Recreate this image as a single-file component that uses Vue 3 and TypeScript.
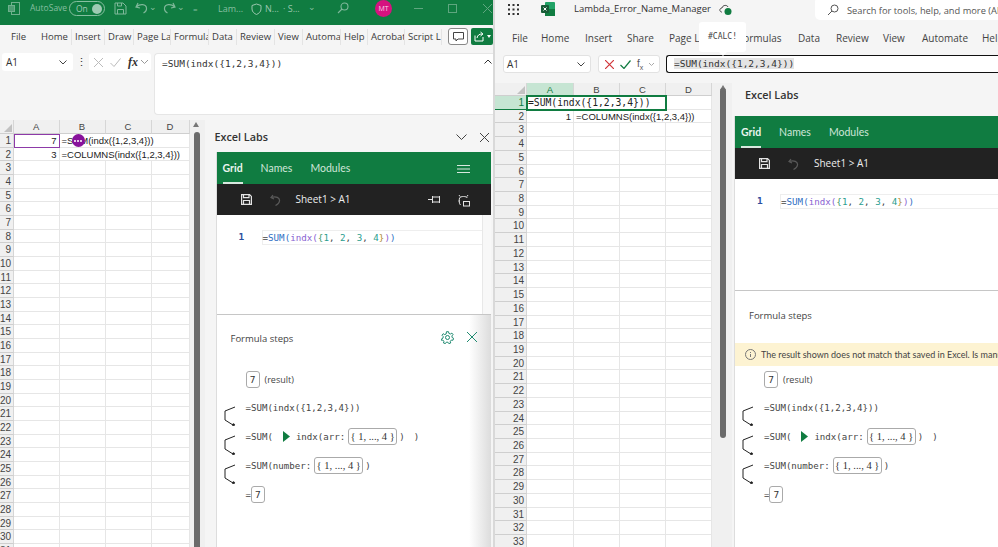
<script setup lang="ts">
const cols = ['A', 'B', 'C', 'D']

const leftTabs = [
  { label: 'File', w: 38 },
  { label: 'Home', w: 34 },
  { label: 'Insert', w: 33 },
  { label: 'Draw', w: 29 },
  { label: 'Page La', w: 37 },
  { label: 'Formula', w: 38 },
  { label: 'Data', w: 28 },
  { label: 'Review', w: 38 },
  { label: 'View', w: 28 },
  { label: 'Automa', w: 38 },
  { label: 'Help', w: 27 },
  { label: 'Acrobat', w: 37 },
  { label: 'Script L', w: 37 },
]

const rightTabs = [
  { label: 'File', w: 29 },
  { label: 'Home', w: 44 },
  { label: 'Insert', w: 42 },
  { label: 'Share', w: 42 },
  { label: 'Page L', w: 69 },
  { label: 'Formulas', w: 60 },
  { label: 'Data', w: 38 },
  { label: 'Review', w: 47 },
  { label: 'View', w: 39 },
  { label: 'Automate', w: 60 },
  { label: 'Help', w: 40 },
]
</script>

<template>
  <div class="screen">
    <!-- desktop excel -->
    <section class="win win-left">
      <header class="titlebar">
        <svg class="t-icon xl" width="14" height="15" viewBox="0 0 14 15" fill="none" stroke="#6fb08d"><rect x="4.5" y="1.5" width="8" height="12" /><rect x="1.5" y="4.5" width="6" height="6" fill="#4f9d74" /></svg>
        <span class="autosave">AutoSave</span>
        <span class="toggle"><span>On</span><i></i></span>
        <svg class="t-icon save" width="13" height="13" viewBox="0 0 13 13" fill="none" stroke="#7fb89a"><path d="M1 1h8l3 3v8H1zM3.5 12V7.5h6V12M3.5 1v3h4V1" /></svg>
        <svg class="t-icon undo" width="13" height="12" viewBox="0 0 13 12" fill="none" stroke="#7fb89a" stroke-width="1.2"><path d="M3 1 1 5l4 1M1.5 4.8C5 1.5 11 2 11.5 6c.2 2-1 4-3 5" /></svg>
        <span class="t-caret one">⌄</span>
        <svg class="t-icon redo" width="13" height="12" viewBox="0 0 13 12" fill="none" stroke="#7fb89a" stroke-width="1.2"><path d="M10 1l2 4-4 1M11.5 4.8C8 1.5 2 2 1.500 6c-.2 2 1 4 3 5" /></svg>
        <span class="t-caret two">⌄</span>
        <span class="t-more">=</span>
        <span class="t-doc">Lam...</span>
        <svg class="t-icon shield" width="11" height="12" viewBox="0 0 11 12" fill="none" stroke="#9ac7ae"><path d="M5.5 1 10 2.5V6c0 3-2.5 4.600-4.500 5.500C3.500 10.600 1 9 1 6V2.500z" /></svg>
        <span class="t-doc small">N...</span>
        <span class="t-doc small dot">· S...</span>
        <span class="t-caret three">⌄</span>
        <svg class="t-icon find" width="12" height="12" viewBox="0 0 12 12" fill="none" stroke="#7fb89a" stroke-width="1.100"><circle cx="7.500" cy="4.500" r="3.500" /><path d="M5 7 1 11" /></svg>
        <span class="avatar">MT</span>
        <span class="wc min"></span>
        <span class="wc max"></span>
        <svg class="wc-x" width="9" height="9" viewBox="0 0 9 9" stroke="#5fa67f"><path d="M0 0l9 9M9 0 0 9" /></svg>
      </header>

      <nav class="tabs">
        <span v-for="t in leftTabs" :key="t.label" class="tab" :style="{ width: t.w + 'px' }">{{ t.label }}</span>
        <span class="comment-btn">
          <svg width="11" height="10" viewBox="0 0 11 10" fill="none" stroke="#444"><path d="M.5.500h10v6.500H5L3 9V7H.5z" /></svg>
        </span>
        <span class="share-btn">
          <svg width="11" height="11" viewBox="0 0 11 11" fill="none" stroke="#fff"><path d="M1 4.500V10h8V6M3 7c.5-3 2.500-4 5-4M6.500 1 9 3 6.500 5" /></svg>
          <span class="share-caret"></span>
        </span>
      </nav>

      <div class="fbar">
        <div class="namebox">A1<svg width="8" height="5" viewBox="0 0 8 5" fill="none" stroke="#444"><path d="M.5.500 4 4 7.500.500" /></svg></div>
        <span class="vdots">⋮</span>
        <div class="fx-group">
          <svg width="9" height="9" viewBox="0 0 9 9" stroke="#bbb"><path d="M0 0l9 9M9 0 0 9" /></svg>
          <svg width="11" height="9" viewBox="0 0 11 9" fill="none" stroke="#bbb"><path d="M.5 5 4 8.500 10.500.500" /></svg>
          <i class="fx">fx</i>
          <svg width="7" height="4" viewBox="0 0 7 4" fill="none" stroke="#999"><path d="M0 0l3.500 3.500L7 0" /></svg>
        </div>
        <div class="finput">
          =SUM(indx({1,2,3,4}))
          <svg class="fcollapse" width="8" height="5" viewBox="0 0 8 5" fill="none" stroke="#333"><path d="M.5 4.500 4 1l3.500 3.500" /></svg>
        </div>
      </div>

      <div class="body">
        <div class="sheet sheet-left">
          <div class="corner"><i></i></div>
          <div v-for="c in cols" :key="c" class="col-head">{{ c }}</div>
          <template v-for="r in 31" :key="r">
            <div class="row-head">{{ r }}</div>
            <template v-if="r === 1">
              <div class="cell num sel-purple">7</div>
              <div class="cell span-3">=SUM(indx({1,2,3,4}))<span class="presence"><i></i><i></i><i></i></span></div>
            </template>
            <template v-else-if="r === 2">
              <div class="cell num">3</div>
              <div class="cell span-3">=COLUMNS(indx({1,2,3,4}))</div>
            </template>
            <template v-else>
              <div v-for="c in cols" :key="c" class="cell"></div>
            </template>
          </template>
        </div>
        <div class="vscroll vscroll-left"><i class="arrow"></i><b class="thumb"></b></div>

        <aside class="labs labs-left">
          <div class="labs-title">
            <span>Excel Labs</span>
            <svg class="l-chev" width="11" height="6" viewBox="0 0 11 6" fill="none" stroke="#444"><path d="M.5.500l5 5 5-5" /></svg>
            <svg class="l-close" width="9" height="9" viewBox="0 0 9 9" stroke="#444"><path d="M0 0l9 9M9 0 0 9" /></svg>
          </div>
          <div class="labs-frame">
            <div class="green-bar">
              <span class="g-tab on">Grid</span><span class="g-tab">Names</span><span class="g-tab">Modules</span>
              <svg class="burger" width="13" height="8" viewBox="0 0 13 8" stroke="#d8e8df"><path d="M0 .5h13M0 4h13M0 7.500h13" /></svg>
            </div>
            <div class="dark-bar">
              <svg class="d-save" width="11" height="11" viewBox="0 0 11 11" fill="none" stroke="#e4e4e4" stroke-width="1.200"><path d="M.6.600h8l1.800 1.800v8H.6zM2.500.6v3h5.500v-3M2.500 10.400V6.500h6v3.900" /></svg>
              <svg class="d-undo" width="11" height="12" viewBox="0 0 11 12" fill="none" stroke="#5a5a5a" stroke-width="1.200"><path d="M3 1 1 3.500 4 5M1.200 3.500C6 2 10 3.500 9.500 7c-.2 2-2 3.500-4 4.500" /></svg>
              <span class="crumb">Sheet1 &gt; A1</span>
              <svg class="d-pin" width="13" height="9" viewBox="0 0 13 9" fill="none" stroke="#e4e4e4"><path d="M0 4.500h4M4.500 1v7M4.500 2h7v5h-7M11.500 1v7" /></svg>
              <svg class="d-bug" width="12" height="13" viewBox="0 0 12 13" fill="none" stroke="#e4e4e4"><path d="M2 2.500 1 1M9 2.500 10 1M2.500 11C1 10 1 6 1.500 4c1-2 7-2 8 0M.500 7H2" /><rect x="5.500" y="7.500" width="6" height="4.500" /></svg>
            </div>
            <div class="editor">
              <span class="ln">1</span>
              <div class="code-line">
                <span class="k-eq">=</span><span class="k-fn">SUM(</span><span class="k-id">indx(</span><span class="k-br">{</span><span class="k-n">1</span>, <span class="k-n">2</span>, <span class="k-n">3</span>, <span class="k-n">4</span><span class="k-cl">}</span><span class="k-id">)</span><span class="k-fn">)</span>
              </div>
              <i class="ed-scroll"></i>
            </div>
            <div class="steps steps-left">
              <div class="steps-head">
                <span>Formula steps</span>
                <svg class="s-gear" width="13" height="13" viewBox="0 0 13 13" fill="none" stroke="#1f8a70"><circle cx="6.500" cy="6.500" r="2" /><path d="M5.500.700h2l.4 1.700 1.500.6 1.500-.9 1.200 1.600-1.200 1.200.2 1.600 1.500.8-.6 1.900-1.700-.1-1 1.200.4 1.700-1.900.6-.9-1.400h-1.600l-.9 1.400-1.900-.6.4-1.700-1-1.200-1.700.1L.500 7.900l1.500-.8.2-1.600L1 4.300l1.200-1.600 1.500.9 1.400-.6z" /></svg>
                <svg class="s-close" width="10" height="10" viewBox="0 0 10 10" stroke="#1f8a70"><path d="M0 0l10 10M10 0 0 10" /></svg>
              </div>
              <div class="steps-body">
                <div class="result"><span class="box">7</span><span class="res-label">(result)</span></div>
                <div class="flow">
                  <div class="gutter">
                    <svg v-for="n in 3" :key="n" width="12" height="20" viewBox="0 0 12 20" fill="none" stroke="#222"><path d="M11 1 1 5v9l8 5" /><circle cx="9.500" cy="18.800" r="1" fill="#222" /></svg>
                  </div>
                  <div class="lines">
                    <div class="line">=SUM(indx({1,2,3,4}))</div>
                    <div class="line">=SUM(<svg class="play" width="7" height="11" viewBox="0 0 7 11"><path d="M0 0l7 5.500L0 11z" fill="#107c41" /></svg>indx(arr:<span class="box wide">{ 1, ..., 4 }</span>)<span class="close-p">)</span></div>
                    <div class="line">=SUM(number:<span class="box wide">{ 1, ..., 4 }</span>)</div>
                    <div class="line">=<span class="box">7</span></div>
                  </div>
                </div>
              </div>
            </div>
          </div>
        </aside>
      </div>
    </section>

    <!-- excel for the web -->
    <section class="win win-right">
      <header class="r-title">
        <svg class="waffle" width="11" height="11" viewBox="0 0 11 11" fill="#333"><rect v-for="i in 9" :key="i" :x="((i - 1) % 3) * 4.500" :y="Math.floor((i - 1) / 3) * 4.500" width="2" height="2" /></svg>
        <svg class="r-xl" width="14" height="14" viewBox="0 0 14 14"><rect x="4" width="10" height="14" rx="1" fill="#21a366" /><rect x="4" y="7" width="10" height="7" fill="#107c41" /><rect y="3" width="8" height="8" rx="1" fill="#185c37" /><path d="M2.500 5.500l3 3M5.500 5.500l-3 3" stroke="#fff" /></svg>
        <span class="r-doc">Lambda_Error_Name_Manager</span>
        <svg class="r-cloud" width="13" height="13" viewBox="0 0 13 13" fill="none" stroke="#444"><path d="M3 9H2.500C0 8.500 .5 5 3 5c.5-3 5-3.500 6-1" /><circle cx="9" cy="8.500" r="3.500" fill="#107c41" stroke="none" /></svg>
        <div class="r-search">
          <svg width="12" height="12" viewBox="0 0 12 12" fill="none" stroke="#555"><circle cx="7.500" cy="4.500" r="3.500" /><path d="M5 7 1 11" /></svg>
          <span>Search for tools, help, and more (Alt + Q)</span>
        </div>
      </header>

      <nav class="r-tabs">
        <span v-for="t in rightTabs" :key="t.label" class="r-tab" :style="{ width: t.w + 'px' }">{{ t.label }}</span>
        <div class="calc-tip">#CALC!</div>
      </nav>

      <div class="r-fbar">
        <div class="r-namebox">A1<svg width="8" height="5" viewBox="0 0 8 5" fill="none" stroke="#444"><path d="M.5.500 4 4 7.500.500" /></svg></div>
        <div class="r-fx">
          <svg width="9" height="9" viewBox="0 0 9 9" stroke="#d13438" stroke-width="1.200"><path d="M0 0l9 9M9 0 0 9" /></svg>
          <svg width="11" height="9" viewBox="0 0 11 9" fill="none" stroke="#107c41" stroke-width="1.200"><path d="M.5 5 4 8.500 10.500.500" /></svg>
          <span class="fx-web">f<sub>x</sub></span>
          <svg width="5" height="3" viewBox="0 0 5 3" fill="none" stroke="#aaa"><path d="M0 0l2.500 2.500L5 0" /></svg>
        </div>
        <div class="r-input"><mark>=SUM(indx({1,2,3,4}))</mark></div>
      </div>

      <div class="body">
        <div class="sheet sheet-right">
          <div class="corner"><i></i></div>
          <div v-for="c in cols" :key="c" class="col-head" :class="{ active: c === 'A' }">{{ c }}</div>
          <template v-for="r in 33" :key="r">
            <div class="row-head" :class="{ active: r === 1 }">{{ r }}</div>
            <template v-if="r === 1">
              <div class="cell editing">=SUM(indx({1,2,3,4}))</div>
              <div class="cell"></div>
            </template>
            <template v-else-if="r === 2">
              <div class="cell num">1</div>
              <div class="cell span-3">=COLUMNS(indx({1,2,3,4}))</div>
            </template>
            <template v-else>
              <div v-for="c in cols" :key="c" class="cell"></div>
            </template>
          </template>
        </div>
        <div class="vscroll vscroll-right"><i class="arrow"></i><b class="thumb"></b></div>

        <aside class="labs labs-right">
          <div class="labs-title"><span>Excel Labs</span></div>
          <div class="labs-frame">
            <div class="green-bar">
              <span class="g-tab on">Grid</span><span class="g-tab">Names</span><span class="g-tab">Modules</span>
            </div>
            <div class="dark-bar">
              <svg class="d-save" width="11" height="11" viewBox="0 0 11 11" fill="none" stroke="#e4e4e4" stroke-width="1.200"><path d="M.6.600h8l1.800 1.800v8H.6zM2.500.6v3h5.500v-3M2.500 10.400V6.500h6v3.900" /></svg>
              <svg class="d-undo" width="11" height="12" viewBox="0 0 11 12" fill="none" stroke="#5a5a5a" stroke-width="1.200"><path d="M3 1 1 3.500 4 5M1.200 3.500C6 2 10 3.500 9.500 7c-.2 2-2 3.500-4 4.500" /></svg>
              <span class="crumb">Sheet1 &gt; A1</span>
            </div>
            <div class="editor">
              <span class="ln">1</span>
              <div class="code-line">
                <span class="k-eq">=</span><span class="k-fn">SUM(</span><span class="k-id">indx(</span><span class="k-br">{</span><span class="k-n">1</span>, <span class="k-n">2</span>, <span class="k-n">3</span>, <span class="k-n">4</span><span class="k-cl">}</span><span class="k-id">)</span><span class="k-fn">)</span>
              </div>
            </div>
            <div class="steps steps-right">
              <div class="steps-head"><span>Formula steps</span></div>
              <div class="notice">
                <svg width="11" height="11" viewBox="0 0 11 11" fill="none" stroke="#777"><circle cx="5.500" cy="5.500" r="5" /><path d="M5.500 5v3M5.500 3v1" /></svg>
                <span>The result shown does not match that saved in Excel. Is manual calculation on?</span>
              </div>
              <div class="steps-body">
                <div class="result"><span class="box">7</span><span class="res-label">(result)</span></div>
                <div class="flow">
                  <div class="gutter">
                    <svg v-for="n in 3" :key="n" width="12" height="20" viewBox="0 0 12 20" fill="none" stroke="#222"><path d="M11 1 1 5v9l8 5" /><circle cx="9.500" cy="18.800" r="1" fill="#222" /></svg>
                  </div>
                  <div class="lines">
                    <div class="line">=SUM(indx({1,2,3,4}))</div>
                    <div class="line">=SUM(<svg class="play" width="7" height="11" viewBox="0 0 7 11"><path d="M0 0l7 5.500L0 11z" fill="#107c41" /></svg>indx(arr:<span class="box wide">{ 1, ..., 4 }</span>)<span class="close-p">)</span></div>
                    <div class="line">=SUM(number:<span class="box wide">{ 1, ..., 4 }</span>)</div>
                    <div class="line">=<span class="box">7</span></div>
                  </div>
                </div>
              </div>
            </div>
          </div>
        </aside>
      </div>
    </section>
  </div>
</template>

<style scoped>
.screen {
  display: flex;
  width: 998px;
  height: 547px;
  overflow: hidden;
  background: #d9d9d9;
  font-family: "Open Sans", "Liberation Sans", sans-serif;
  color: #333;
}

.win {
  display: flex;
  flex-direction: column;
  height: 547px;
  overflow: hidden;
  background: #f5f5f5;
}

.win-left {
  width: 493px;
}

.win-right {
  width: 503px;
  margin-left: 2px;
}

/* left title bar */
.titlebar {
  position: relative;
  flex: none;
  height: 25px;
  background: #107c41;
}

.titlebar > * {
  position: absolute;
}

.t-icon.xl { left: 7px; top: 1px; }
.autosave { left: 30px; top: 2px; font-size: 8.5px; color: #86bfa0; }
.toggle {
  left: 69px;
  top: 1px;
  display: flex;
  align-items: center;
  justify-content: space-between;
  box-sizing: border-box;
  width: 36px;
  height: 15px;
  padding: 0 2px 0 6px;
  border: 1px solid #86bfa0;
  border-radius: 8px;
  font-size: 8.5px;
  color: #9ecbb3;
}
.toggle i { width: 10px; height: 10px; border-radius: 50%; background: #9ecbb3; }
.t-icon.save { left: 114px; top: 2px; }
.t-icon.undo { left: 135px; top: 2px; }
.t-caret { font-size: 9px; color: #86bfa0; line-height: 10px; }
.t-caret.one { left: 149px; top: 2px; }
.t-icon.redo { left: 163px; top: 2px; }
.t-caret.two { left: 177px; top: 2px; }
.t-more { left: 193px; top: 3px; font-size: 8px; color: #86bfa0; }
.t-doc { left: 218px; top: 2px; font-size: 9px; color: #86bfa0; }
.t-icon.shield { left: 251px; top: 3px; }
.t-doc.small { left: 265px; color: #9ac7ae; }
.t-doc.dot { left: 283px; }
.t-caret.three { left: 308px; top: 2px; }
.t-icon.find { left: 337px; top: 2px; }
.avatar {
  left: 375px;
  top: 0;
  display: flex;
  align-items: center;
  justify-content: center;
  width: 17px;
  height: 17px;
  border-radius: 50%;
  background: #d6127f;
  color: #f6d5e8;
  font-size: 7px;
}
.wc.min { left: 414px; top: 8px; width: 9px; height: 1px; background: #5fa67f; }
.wc.max { left: 448px; top: 4px; width: 7px; height: 7px; border: 1px solid #5fa67f; }
.wc-x { left: 483px; top: 4px; }

/* left ribbon */
.tabs {
  position: relative;
  flex: none;
  display: flex;
  align-items: flex-start;
  box-sizing: border-box;
  height: 28px;
  padding-top: 4px;
  font-size: 9.5px;
}

.tab {
  flex: none;
  box-sizing: border-box;
  padding-left: 3px;
  overflow: hidden;
  white-space: nowrap;
  border-right: 1px solid #e4e4e4;
  line-height: 16px;
  color: #3a3a3a;
}

.tab:first-child {
  padding-left: 11px;
  border-right: 0;
}

.comment-btn {
  position: absolute;
  left: 448px;
  top: 3px;
  display: flex;
  align-items: center;
  justify-content: center;
  box-sizing: border-box;
  width: 20px;
  height: 17px;
  border: 1px solid #888;
  border-radius: 3px;
  background: #fff;
}

.share-btn {
  position: absolute;
  left: 471px;
  top: 3px;
  display: flex;
  align-items: center;
  gap: 2px;
  box-sizing: border-box;
  width: 22px;
  height: 17px;
  padding-left: 3px;
  border-radius: 2px;
  background: #107c41;
}

.share-caret {
  width: 0;
  height: 0;
  border-left: 2.500px solid transparent;
  border-right: 2.500px solid transparent;
  border-top: 3px solid #fff;
}

.fbar {
  flex: none;
  display: flex;
  height: 62px;
  padding-left: 2px;
}

.namebox {
  display: flex;
  align-items: center;
  justify-content: space-between;
  box-sizing: border-box;
  width: 71px;
  height: 18px;
  padding: 0 6px 0 4px;
  border-radius: 3px;
  background: #fff;
  font-size: 10px;
}

.vdots {
  width: 16px;
  text-align: center;
  font-size: 11px;
  line-height: 18px;
  color: #333;
}

.fx-group {
  display: flex;
  align-items: center;
  gap: 7px;
  box-sizing: border-box;
  width: 62px;
  height: 18px;
  padding-left: 5px;
  border-radius: 3px;
  background: #fff;
}

.fx {
  font-family: "Liberation Serif", serif;
  font-size: 12px;
  font-weight: 700;
  color: #333;
  margin-right: -4px;
}

.finput {
  position: relative;
  flex: 1;
  margin-left: 3px;
  padding: 3px 0 0 7px;
  border-radius: 4px 0 0 4px;
  background: #fff;
  border: 1px solid #e6e6e6;
  border-right: 0;
  font-family: "DejaVu Sans Mono", monospace;
  font-size: 9.500px;
  line-height: 14px;
  color: #333;
}

.fcollapse {
  position: absolute;
  right: 1px;
  top: 5px;
}

/* sheets */
.body {
  flex: 1;
  display: flex;
  min-height: 0;
}

.win-left .body {
  margin-top: 5px;
}

.win-right .body {
  margin-top: 10px;
}

.sheet {
  flex: none;
  display: grid;
  align-content: start;
  background: #fff;
  font-family: "Liberation Sans", sans-serif;
  font-size: 9.500px;
  color: #222;
}

.sheet-left {
  grid-template-columns: 14px 45.500px 46px 46px 38px;
  grid-template-rows: 14px;
  grid-auto-rows: 13.680px;
}

.sheet-right {
  grid-template-columns: 32px 47px 46px 46px 46px;
  grid-template-rows: 13px;
  grid-auto-rows: 13.720px;
}

.corner,
.col-head,
.row-head {
  box-sizing: border-box;
  background: #f0f0f0;
  border-right: 1px solid #d6d6d6;
  border-bottom: 1px solid #cfcfcf;
  color: #444;
  font-size: 9.500px;
  line-height: 13px;
  text-align: center;
}

.corner {
  position: relative;
}

.corner i {
  position: absolute;
  right: 1px;
  bottom: 1px;
  width: 0;
  height: 0;
  border-left: 8px solid transparent;
  border-bottom: 8px solid #c2c2c2;
}

.row-head {
  text-align: right;
  padding-right: 2px;
  font-size: 10px;
}

.col-head.active,
.row-head.active {
  background: #c6e5d3;
  color: #107c41;
  border-bottom-color: #107c41;
}

.cell {
  position: relative;
  box-sizing: border-box;
  padding: 0 2px;
  border-right: 1px solid #e6e6e6;
  border-bottom: 1px solid #e6e6e6;
  white-space: nowrap;
  line-height: 13px;
}

.span-3 {
  grid-column: span 3;
}

.num {
  text-align: right;
}

.sel-purple {
  outline: 1.500px solid #8d3aa8;
  outline-offset: -1px;
  z-index: 1;
}

.presence {
  position: absolute;
  left: 12px;
  top: 0;
  display: flex;
  align-items: center;
  justify-content: center;
  gap: 1px;
  width: 13px;
  height: 13px;
  border-radius: 50%;
  background: #88129b;
}

.presence i {
  width: 2px;
  height: 2px;
  border-radius: 50%;
  background: #fff;
}

.editing {
  grid-column: span 3;
  outline: 2px solid #107c41;
  outline-offset: -1px;
  z-index: 1;
  font-family: "DejaVu Sans Mono", monospace;
  font-size: 9.700px;
  padding-left: 1px;
}

.vscroll {
  position: relative;
  flex: none;
  background: #f0f0f0;
}

.vscroll-left { width: 15px; }
.vscroll-right { width: 20px; }

.arrow {
  position: absolute;
  top: 2px;
  left: 3px;
  width: 0;
  height: 0;
  border-left: 3.500px solid transparent;
  border-right: 3.500px solid transparent;
  border-bottom: 5px solid #777;
}

.vscroll-left .arrow { left: 3px; }
.vscroll-right .arrow { left: 8px; }

.thumb {
  position: absolute;
  left: 4px;
  top: 12px;
  bottom: 0;
  width: 6px;
  border-radius: 3px 3px 0 0;
  background: #6b6b6b;
}

.vscroll-right .thumb {
  left: 8px;
  top: 5px;
  bottom: auto;
  height: 350px;
  border-radius: 3px;
}

/* Excel Labs pane */
.labs {
  flex: 1;
  min-width: 0;
  display: flex;
  flex-direction: column;
  overflow: hidden;
}

.labs-left {
  padding-left: 11px;
}

.labs-right {
  padding-left: 2px;
}

.labs-title {
  position: relative;
  flex: none;
  font-size: 10.800px;
  font-weight: 600;
  color: #333;
}

.labs-left .labs-title {
  height: 32px;
  padding: 9px 0 0 0;
  box-sizing: border-box;
  margin-left: -1px;
}

.labs-right .labs-title {
  height: 33px;
  padding: 4px 0 0 11px;
  box-sizing: border-box;
}

.l-chev { position: absolute; left: 241px; top: 14px; }
.l-close { position: absolute; left: 265px; top: 13px; }

.labs-frame {
  flex: 1;
  display: flex;
  flex-direction: column;
  min-height: 0;
  background: #fff;
  border-left: 1px solid #ddd;
}

.labs-left .labs-frame {
  margin-right: 2px;
}

.green-bar {
  position: relative;
  flex: none;
  display: flex;
  gap: 18px;
  height: 32px;
  padding-left: 6px;
  background: #107c41;
  font-family: Lato, sans-serif;
  font-size: 10.500px;
  line-height: 32px;
  color: #cfe6d9;
}

.g-tab.on {
  position: relative;
  font-weight: 700;
  color: #eaf4ee;
}

.g-tab.on::after {
  content: "";
  position: absolute;
  left: 0;
  right: 0;
  bottom: 0;
  height: 2px;
  background: #d8e8df;
}

.burger {
  position: absolute;
  left: 240px;
  top: 13px;
}

.dark-bar {
  position: relative;
  flex: none;
  height: 31px;
  background: #222;
  box-sizing: border-box;
}

.d-save { position: absolute; left: 24px; top: 10px; }
.d-undo { position: absolute; left: 53px; top: 10px; }

.crumb {
  position: absolute;
  left: 79px;
  top: 0;
  font-size: 10px;
  line-height: 31px;
  color: #eee;
}

.d-pin { position: absolute; left: 211px; top: 11px; }
.d-bug { position: absolute; left: 241px; top: 10px; }

.editor {
  position: relative;
  flex: none;
  display: flex;
  box-sizing: border-box;
  border-bottom: 1px solid #c6c6c6;
}

.labs-left .editor {
  height: 100px;
  padding-top: 15px;
}

.labs-right .editor {
  height: 112px;
  padding-top: 15px;
}

.ln {
  width: 45px;
  padding-left: 22px;
  box-sizing: border-box;
  font-family: "DejaVu Sans Mono", monospace;
  font-size: 9.500px;
  font-weight: 700;
  line-height: 13px;
  color: #2c4f9e;
}

.code-line {
  flex: 1;
  height: 13px;
  border: 1px solid #eee;
  border-right: 0;
  box-sizing: content-box;
  font-family: "DejaVu Sans Mono", monospace;
  font-size: 9.200px;
  line-height: 13px;
  color: #444;
  white-space: nowrap;
}

.ed-scroll {
  position: absolute;
  right: 0;
  top: 0;
  bottom: 0;
  width: 8px;
  border-left: 1px solid #e8e8e8;
  background: #f8f8f8;
}

.k-eq { color: #444; }
.k-fn { color: #2f6fc4; }
.k-id { color: #8a63d2; }
.k-br { color: #3a9a6a; }
.k-cl { color: #b08a30; }
.k-n { color: #2a9d8f; }

.steps {
  flex: 1;
  min-height: 0;
  overflow: hidden;
}

.steps-left {
  background: linear-gradient(90deg, #fff 92%, #dcdcdc 100%);
}

.steps-head {
  position: relative;
  font-size: 9.500px;
  color: #444;
}

.steps-left .steps-head {
  height: 40px;
  padding: 17px 0 0 14px;
  box-sizing: border-box;
}

.steps-right .steps-head {
  height: 52px;
  padding: 18px 0 0 14px;
  box-sizing: border-box;
}

.s-gear { position: absolute; left: 224px; top: 16px; }
.s-close { position: absolute; left: 250px; top: 17px; }

.notice {
  display: flex;
  align-items: center;
  gap: 5px;
  height: 23px;
  padding-left: 10px;
  background: #fdf3d2;
  font-family: Lato, sans-serif;
  font-size: 9px;
  color: #444;
  white-space: nowrap;
}

.notice svg {
  flex: none;
}

.steps-left .steps-body {
  padding: 16px 0 0 7px;
}

.steps-right .steps-body {
  padding: 5px 0 0 7px;
}

.result {
  display: flex;
  align-items: center;
  gap: 5px;
  margin-left: 22px;
  height: 17px;
  font-size: 9px;
  color: #444;
}

.flow {
  display: flex;
  margin-top: 11px;
}

.gutter {
  flex: none;
  display: flex;
  flex-direction: column;
  gap: 9px;
  width: 22px;
  padding-top: 7px;
}

.lines {
  font-family: "DejaVu Sans Mono", monospace;
  font-size: 9.100px;
  color: #444;
  white-space: nowrap;
}

.line {
  display: flex;
  align-items: center;
  height: 17px;
  margin-bottom: 12px;
}

.box {
  display: inline-flex;
  align-items: center;
  justify-content: center;
  box-sizing: border-box;
  min-width: 14px;
  height: 17px;
  padding: 0 3px;
  border: 1px solid #aaa;
  border-radius: 3px;
  background: #fff;
  font-family: "DejaVu Sans Mono", monospace;
  font-size: 9.500px;
  color: #333;
}

.box.wide {
  width: 49px;
  margin: 0 2px 0 3px;
  padding: 0;
  font-family: "Liberation Serif", serif;
  font-size: 10.500px;
  white-space: nowrap;
}

.play {
  margin: 0 6px 0 10px;
}

.close-p {
  margin-left: 9px;
}

/* right header */
.r-title {
  position: relative;
  flex: none;
  height: 22px;
}

.r-title > * {
  position: absolute;
}

.waffle { left: 13px; top: 4px; }
.r-xl { left: 46px; top: 2px; }
.r-doc { left: 79px; top: 2px; font-size: 9.500px; color: #333; white-space: nowrap; }
.r-cloud { left: 224px; top: 3px; }

.r-search {
  left: 320px;
  top: -3px;
  display: flex;
  align-items: center;
  gap: 8px;
  box-sizing: border-box;
  width: 190px;
  height: 23px;
  padding: 3px 0 0 12px;
  border-radius: 5px;
  background: #fff;
  font-size: 9.300px;
  color: #555;
  white-space: nowrap;
  overflow: hidden;
}

.r-search svg {
  flex: none;
}

.r-tabs {
  position: relative;
  flex: none;
  display: flex;
  align-items: center;
  height: 31px;
  padding-left: 17px;
  font-size: 10px;
  color: #444;
  white-space: nowrap;
}

.r-tab {
  flex: none;
}

.calc-tip {
  position: absolute;
  left: 204px;
  top: 0;
  width: 47px;
  height: 30px;
  border-radius: 3px;
  background: #fff;
  font-family: "DejaVu Sans Mono", monospace;
  font-size: 8px;
  line-height: 30px;
  text-align: center;
  color: #444;
}

.calc-tip::after {
  content: "";
  position: absolute;
  left: 20px;
  bottom: -4px;
  width: 0;
  height: 0;
  border-left: 4px solid transparent;
  border-right: 4px solid transparent;
  border-top: 4px solid #fff;
}

.r-fbar {
  flex: none;
  display: flex;
  height: 18px;
  margin-top: 2px;
  padding-left: 8px;
}

.r-namebox {
  display: flex;
  align-items: center;
  justify-content: space-between;
  box-sizing: border-box;
  width: 88px;
  padding: 0 5px 0 3px;
  border: 1px solid #e2e2e2;
  border-radius: 3px;
  background: #fff;
  font-size: 10px;
}

.r-fx {
  display: flex;
  align-items: center;
  gap: 6px;
  box-sizing: border-box;
  width: 62px;
  margin-left: 7px;
  padding-left: 6px;
  border: 1px solid #e2e2e2;
  border-radius: 3px;
  background: #fff;
}

.fx-web {
  font-family: "Liberation Sans", sans-serif;
  font-size: 10px;
  color: #555;
}

.fx-web sub {
  font-size: 7px;
}

.r-input {
  flex: 1;
  margin-left: 6px;
  padding-left: 7px;
  border: 1.500px solid #111;
  border-right: 0;
  border-radius: 3px 0 0 3px;
  background: #fff;
  font-family: "DejaVu Sans Mono", monospace;
  font-size: 9.500px;
  line-height: 15px;
  color: #333;
}

.r-input mark {
  background: #e4e4e4;
  color: inherit;
}
</style>

<style>
html,
body {
  margin: 0;
  overflow: hidden;
}
</style>
